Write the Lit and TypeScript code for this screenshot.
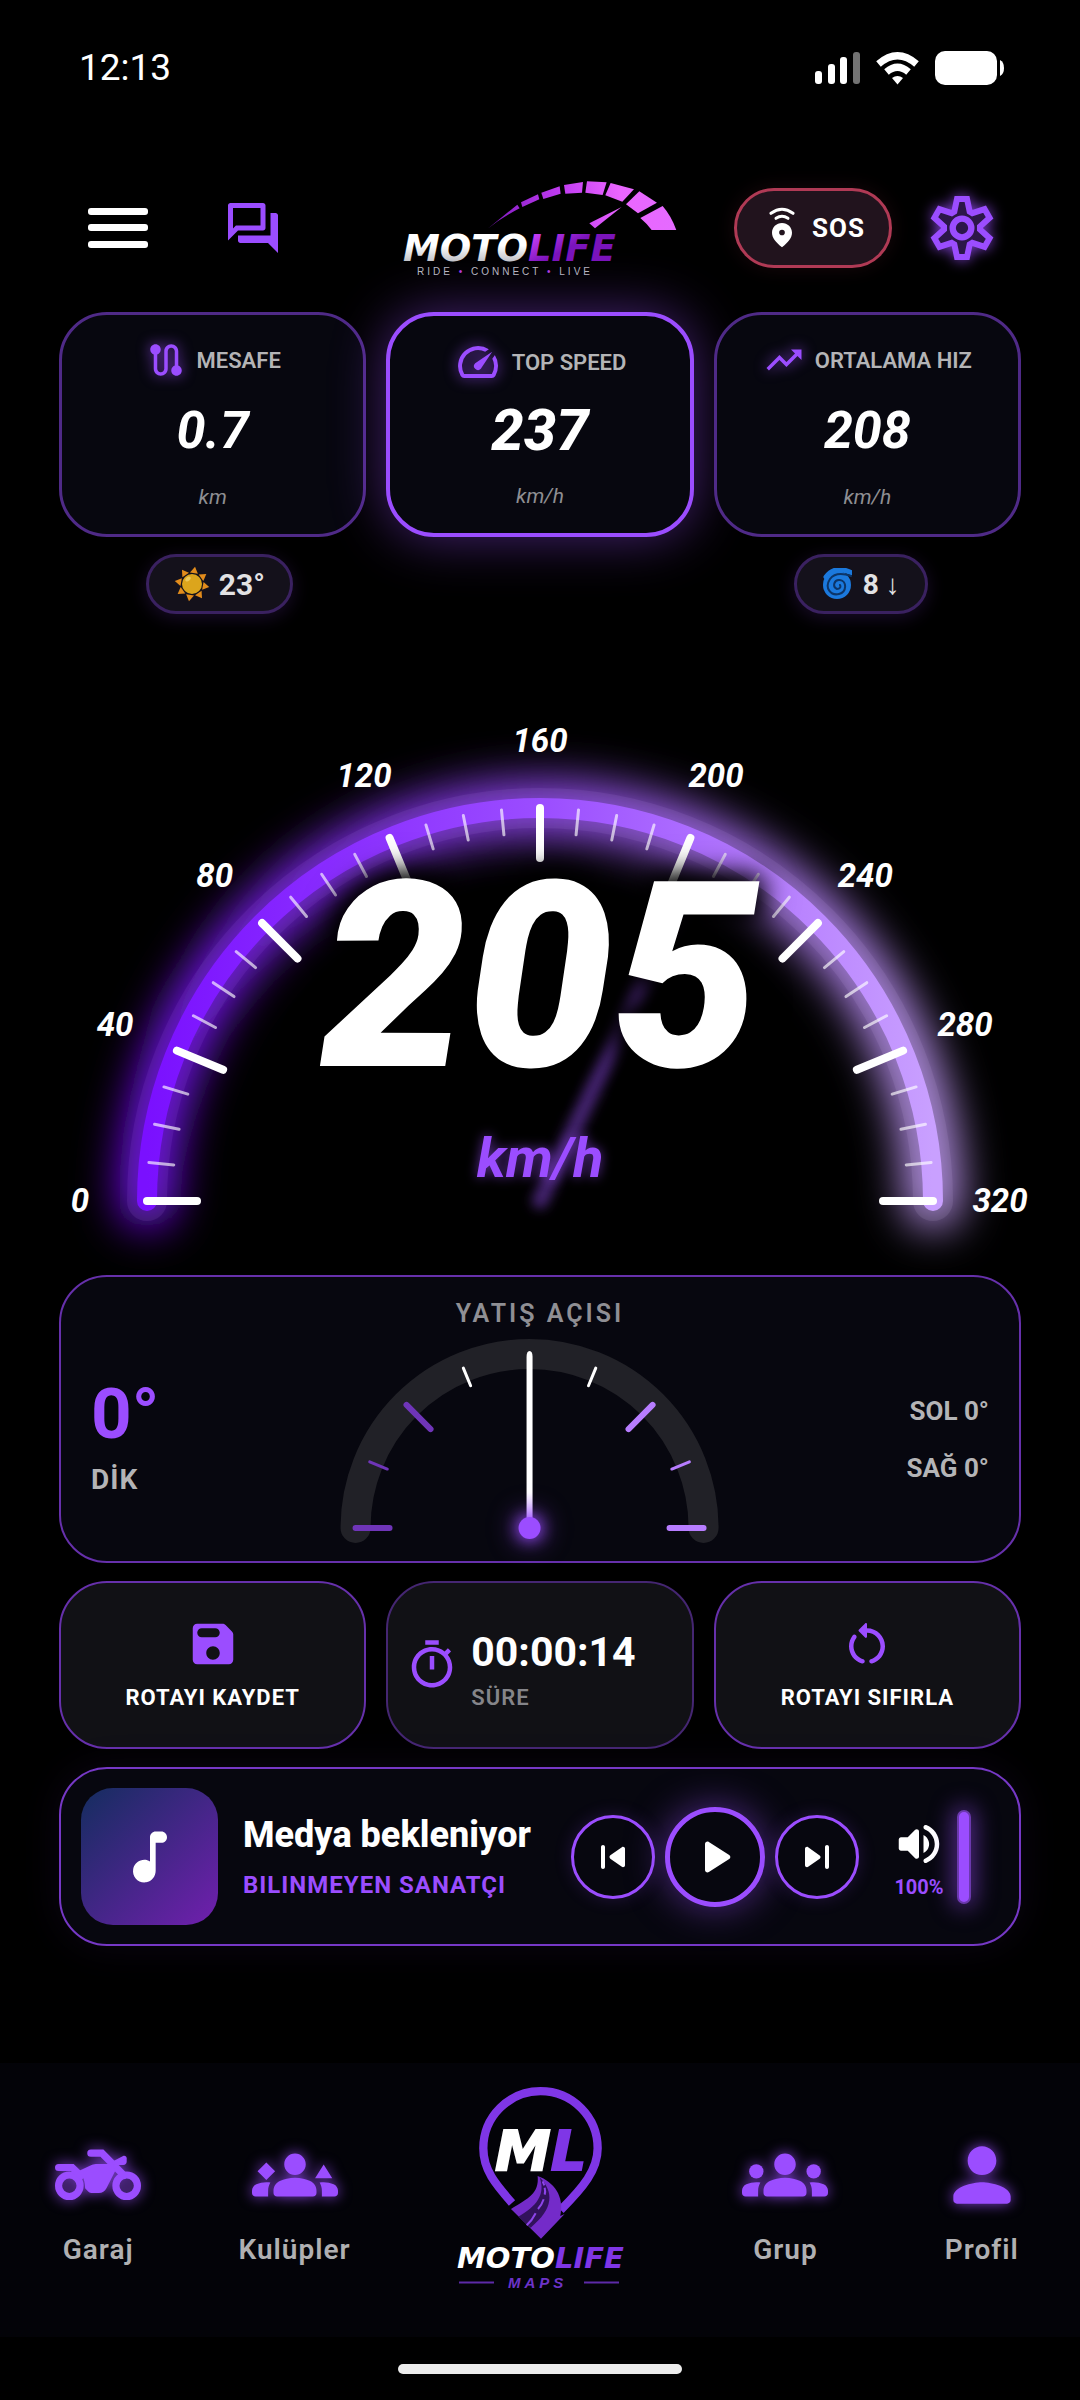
import { LitElement, html, svg, css, TemplateResult } from "lit";
import { customElement, property } from "lit/decorators.js";

/* Icon shapes on a 24-unit grid. */
const ICONS: Record<string, TemplateResult> = {
  forum: svg`<path d="M15 4v7H5.17L4 12.17V4h11m1-2H3c-.55 0-1 .45-1 1v14l4-4h10c.55 0 1-.45 1-1V3c0-.55-.45-1-1-1zm5 4h-2v9H6v2c0 .55.45 1 1 1h11l4 4V7c0-.55-.45-1-1-1z"/>`,
  route: svg`<path d="M19 15.18V7c0-2.21-1.79-4-4-4s-4 1.79-4 4v10c0 1.1-.9 2-2 2s-2-.9-2-2V8.82C8.16 8.4 9 7.3 9 6c0-1.66-1.34-3-3-3S3 4.34 3 6c0 1.3.84 2.4 2 2.82V17c0 2.21 1.79 4 4 4s4-1.79 4-4V7c0-1.1.9-2 2-2s2 .9 2 2v8.18c-1.16.41-2 1.51-2 2.82 0 1.66 1.34 3 3 3s3-1.34 3-3c0-1.3-.84-2.4-2-2.82z"/>`,
  speed: svg`<path d="M20.38 8.57l-1.23 1.85a8 8 0 0 1-.22 7.58H5.07A8 8 0 0 1 15.58 6.85l1.85-1.23A10 10 0 0 0 3.35 19a2 2 0 0 0 1.72 1h13.85a2 2 0 0 0 1.74-1 10 10 0 0 0-.27-10.44zm-9.79 6.84a2 2 0 0 0 2.83 0l5.66-8.49-8.49 5.66a2 2 0 0 0 0 2.83z"/>`,
  trend: svg`<path d="M16 6l2.29 2.29-4.88 4.88-4-4L2 16.59 3.41 18l6-6 4 4 6.3-6.29L22 12V6z"/>`,
  save: svg`<path d="M17.59 3.59c-.38-.38-.89-.59-1.42-.59H5c-1.11 0-2 .9-2 2v14c0 1.1.9 2 2 2h14c1.1 0 2-.9 2-2V7.83c0-.53-.21-1.04-.59-1.41l-2.82-2.83zM12 19c-1.66 0-3-1.34-3-3s1.34-3 3-3 3 1.34 3 3-1.34 3-3 3zm1-10H7c-1.1 0-2-.9-2-2s.9-2 2-2h6c1.1 0 2 .9 2 2s-.9 2-2 2z"/>`,
  timer: svg`<path d="M15 1H9v2h6V1zm-4 13h2V8h-2v6zm8.03-6.61l1.42-1.42c-.43-.51-.9-.99-1.41-1.41l-1.42 1.42C16.07 4.74 14.12 4 12 4c-4.97 0-9 4.03-9 9s4.02 9 9 9 9-4.03 9-9c0-2.12-.74-4.07-1.97-5.61zM12 20c-3.87 0-7-3.13-7-7s3.13-7 7-7 7 3.13 7 7-3.13 7-7 7z"/>`,
  restart: svg`<path d="M12 5V3.21c0-.45-.54-.67-.85-.35l-2.8 2.79c-.2.2-.2.51 0 .71l2.79 2.79c.32.31.86.09.86-.36V7c3.31 0 6 2.69 6 6 0 2.72-1.83 5.02-4.31 5.75-.42.12-.69.52-.69.95 0 .65.62 1.16 1.25.97C17.57 19.7 20 16.64 20 13c0-4.42-3.58-8-8-8zM6 13c0-1.34.44-2.58 1.19-3.59.3-.4.26-.95-.09-1.31-.42-.42-1.14-.38-1.5.1C4.6 9.54 4 11.2 4 13c0 3.64 2.43 6.7 5.75 7.67.63.19 1.25-.33 1.25-.98 0-.43-.28-.83-.69-.94C7.83 18.02 6 15.72 6 13z"/>`,
  note: svg`<path d="M12 5v8.55c-.94-.54-2.1-.75-3.33-.32-1.34.48-2.37 1.67-2.61 3.07-.46 2.74 1.86 5.08 4.59 4.65 1.96-.31 3.35-2.11 3.35-4.1V7h2c1.1 0 2-.9 2-2s-.9-2-2-2h-2c-1.1 0-2 .9-2 2z"/>`,
  prev: svg`<path d="M7 6c.55 0 1 .45 1 1v10c0 .55-.45 1-1 1s-1-.45-1-1V7c0-.55.45-1 1-1zm3.66 6.82l5.77 4.07c.66.47 1.58-.01 1.58-.82V7.93c0-.81-.91-1.28-1.58-.82l-5.77 4.07c-.57.4-.57 1.24 0 1.64z"/>`,
  play: svg`<path d="M8 6.82v10.36c0 .79.87 1.27 1.54.84l8.14-5.18c.62-.39.62-1.29 0-1.69L9.54 5.98C8.87 5.55 8 6.03 8 6.82z"/>`,
  next: svg`<path d="M7.58 16.89l5.77-4.07c.56-.4.56-1.24 0-1.63L7.58 7.11C6.91 6.65 6 7.12 6 7.93v8.14c0 .81.91 1.28 1.58.82zM16 7v10c0 .55.45 1 1 1s1-.45 1-1V7c0-.55-.45-1-1-1s-1 .45-1 1z"/>`,
  volume: svg`<path d="M3 10v4c0 .55.45 1 1 1h3l3.29 3.29c.63.63 1.71.18 1.71-.71V6.41c0-.89-1.08-1.34-1.71-.71L7 9H4c-.55 0-1 .45-1 1zm13.5 2c0-1.77-1.02-3.29-2.5-4.03v8.05c1.48-.73 2.5-2.25 2.5-4.02zM14 4.45v.2c0 .38.25.71.6.85C17.18 6.53 19 9.06 19 12s-1.82 5.47-4.4 6.5c-.36.14-.6.47-.6.85v.2c0 .63.63 1.07 1.21.85C18.6 19.11 21 15.84 21 12s-2.4-7.11-5.79-8.4c-.58-.23-1.21.22-1.21.85z"/>`,
  person: svg`<path d="M12 12c2.21 0 4-1.79 4-4s-1.79-4-4-4-4 1.79-4 4 1.79 4 4 4zm0 2c-2.67 0-8 1.34-8 4v1c0 .55.45 1 1 1h14c.55 0 1-.45 1-1v-1c0-2.66-5.33-4-8-4z"/>`,
  group: svg`<circle cx="4" cy="11" r="2"/><circle cx="20" cy="11" r="2"/><path d="M12 12.75c1.63 0 3.07.39 4.24.9 1.08.48 1.76 1.56 1.76 2.73V17c0 .55-.45 1-1 1H7c-.55 0-1-.45-1-1v-.61c0-1.18.68-2.26 1.76-2.73 1.17-.52 2.61-.91 4.24-.91zM5.13 14.1c-.37-.06-.74-.1-1.13-.1-.99 0-1.93.21-2.78.58C.48 14.9 0 15.62 0 16.43V17c0 .55.45 1 1 1h3.5v-1.61c0-.83.23-1.61.63-2.29zM24 16.43c0-.81-.48-1.53-1.22-1.85-.85-.37-1.79-.58-2.78-.58-.39 0-.76.04-1.13.1.4.68.63 1.46.63 2.29V18H23c.55 0 1-.45 1-1v-.57zM12 6c1.66 0 3 1.34 3 3s-1.34 3-3 3-3-1.34-3-3 1.34-3 3-3z"/>`,
  clubs: svg`<path d="M4 8.5l2.45 2.45L4 13.4l-2.45-2.45zM20 9.1l2.4 3.8h-4.8z"/><path d="M12 12.75c1.63 0 3.07.39 4.24.9 1.08.48 1.76 1.56 1.76 2.73V17c0 .55-.45 1-1 1H7c-.55 0-1-.45-1-1v-.61c0-1.18.68-2.26 1.76-2.73 1.17-.52 2.61-.91 4.24-.91zM5.13 14.1c-.37-.06-.74-.1-1.13-.1-.99 0-1.93.21-2.78.58C.48 14.9 0 15.62 0 16.43V17c0 .55.45 1 1 1h3.5v-1.61c0-.83.23-1.61.63-2.29zM24 16.43c0-.81-.48-1.53-1.22-1.85-.85-.37-1.79-.58-2.78-.58-.39 0-.76.04-1.13.1.4.68.63 1.46.63 2.29V18H23c.55 0 1-.45 1-1v-.57zM12 6c1.66 0 3 1.34 3 3s-1.34 3-3 3-3-1.34-3-3 1.34-3 3-3z"/>`,
  bike: svg`<g fill="none" stroke="currentColor" stroke-width="2"><circle cx="4" cy="15" r="3"/><circle cx="20" cy="15" r="3"/><path d="M10 5.9h3.1l6.1 6.2" stroke-linecap="round"/><path d="M1 9.9h3.8l2.4 2.3" stroke-linecap="round"/></g><path d="M15.8 8.4L19 6.7c.5-.2 1 .1 1 .6v1c0 .5-.4.9-.9.9h-2.5z"/><path d="M6.6 10.9l3.6-1.7c.6-.2 1-.3 1.600-.3h4.400l.6 2-2.400 4.700c-.5.9-1.200 1.400-2.200 1.400h-1.600c-.6 0-1-.1-1.400-.5l-.8-.8c0-1.600-.4-3.400-1.800-4.800z"/>`,
};

const icon = (name: string, cls = "") =>
  html`<svg class="icon ${cls}" viewBox="0 0 24 24" fill="currentColor" aria-hidden="true">${ICONS[name]}</svg>`;

/* Six-toothed gear outline, each tooth being the first one turned by 60°. */
const gearPoints = Array.from({ length: 6 }, (_, i) => {
  const a = (i * Math.PI) / 3;
  return [[-23, -49], [-15, -87], [15, -87], [23, -49]]
    .map(([x, y]) => `${(x * Math.cos(a) - y * Math.sin(a)).toFixed(1)},${(x * Math.sin(a) + y * Math.cos(a)).toFixed(1)}`)
    .join(" ");
}).join(" ");

const polar = (cx: number, cy: number, r: number, deg: number) => {
  const a = (deg * Math.PI) / 180;
  return { x: cx - r * Math.cos(a), y: cy - r * Math.sin(a) };
};

@customElement("speed-gauge")
export class SpeedGauge extends LitElement {
  @property({ type: Number }) speed = 0;
  @property({ type: Number }) max = 320;

  static styles = css`
    :host { display: block; }
    svg { display: block; width: 100%; overflow: visible; font-family: Roboto, "Liberation Sans", sans-serif; font-style: italic; }
    .mark { font-size: 33px; font-weight: 700; fill: #fff; text-anchor: middle; }
    .speed { font-size: 260px; font-weight: 900; fill: #fff; text-anchor: middle; filter: drop-shadow(0 0 14px #000) drop-shadow(0 0 12px #000); }
    .unit { font-size: 56px; font-weight: 700; fill: #9b4dff; text-anchor: middle; filter: drop-shadow(0 0 6px rgba(155, 77, 255, 0.6)); }
  `;

  render() {
    const cx = 540, cy = 1200, r = 393;
    const arc = `M${cx - r} ${cy}A${r} ${r} 0 0 1 ${cx + r} ${cy}`;
    const marks = [];
    for (let v = 0; v <= this.max; v += 10) {
      const deg = (v / this.max) * 180;
      const major = v % 40 === 0;
      const a = polar(cx, cy, r, deg);
      const b = polar(cx, cy, major ? 343 : 368, deg);
      marks.push(svg`<line x1=${a.x} y1=${a.y} x2=${b.x} y2=${b.y} stroke="#fff"
        stroke-opacity=${major ? 1 : 0.65} stroke-width=${major ? 8 : 3} stroke-linecap="round"/>`);
      if (major) {
        const t = polar(cx, cy, 460, deg);
        marks.push(svg`<text class="mark" x=${t.x} y=${t.y + 11}>${v}</text>`);
      }
    }
    const tip = polar(cx, cy, 320, (this.speed / this.max) * 180);
    return html`
      <svg viewBox="0 613 1080 661" role="img" aria-label="${this.speed} km/h">
        <defs>
          <linearGradient id="band" gradientUnits="userSpaceOnUse" x1="147" y1="0" x2="933" y2="0">
            <stop offset="0" stop-color="#7a10ff"/><stop offset="0.5" stop-color="#9b4dff"/><stop offset="1" stop-color="#c9a0ff"/>
          </linearGradient>
          <filter id="glow" filterUnits="userSpaceOnUse" x="0" y="640" width="1080" height="720"><feGaussianBlur stdDeviation="22"/></filter>
          <filter id="soft" filterUnits="userSpaceOnUse" x="400" y="800" width="400" height="480"><feGaussianBlur stdDeviation="6"/></filter>
        </defs>
        <path d=${arc} fill="none" stroke="#fff" stroke-opacity="0.1" stroke-width="40" stroke-linecap="round"/>
        <path d=${arc} fill="none" stroke="url(#band)" stroke-opacity="0.9" stroke-width="56" stroke-linecap="round" filter="url(#glow)"/>
        <path d=${arc} fill="none" stroke="url(#band)" stroke-width="20" stroke-linecap="round"/>
        ${marks}
        <line x1=${cx} y1=${cy} x2=${tip.x} y2=${tip.y} stroke="#9b4dff" stroke-opacity="0.45" stroke-width="16" stroke-linecap="round" filter="url(#soft)"/>
        <text class="speed" x=${cx} y="1065">${this.speed}</text>
        <text class="unit" x=${cx} y="1176">km/h</text>
      </svg>`;
  }
}

@customElement("lean-gauge")
export class LeanGauge extends LitElement {
  @property({ type: Number }) angle = 0;

  static styles = css`
    :host { display: block; flex: 1; min-width: 0; }
    svg { display: block; width: 100%; height: 213px; overflow: visible; }
    .hub { filter: drop-shadow(0 0 8px #9b4dff) drop-shadow(0 0 12px rgba(155, 77, 255, 0.7)); }
  `;

  render() {
    const cx = 200, cy = 195;
    const ticks = [0, 1, 2, 3, 5, 6, 7, 8].map((i) => {
      const deg = i * 22.5;
      const long = i % 2 === 0;
      const a = polar(cx, cy, long ? 174 : 173, deg);
      const b = polar(cx, cy, long ? 140 : 154, deg);
      const color = i < 3 ? "#6f35b8" : i > 5 ? "#b77dff" : "#fff";
      return svg`<line x1=${a.x} y1=${a.y} x2=${b.x} y2=${b.y} stroke=${color} stroke-width=${long ? 6 : 3} stroke-linecap="round"/>`;
    });
    return html`
      <svg viewBox="0 0 400 213" role="img" aria-label="${this.angle}°">
        <defs>
          <linearGradient id="needle" gradientUnits="userSpaceOnUse" x1="0" y1="18" x2="0" y2="195">
            <stop offset="0.8" stop-color="#fff"/><stop offset="0.95" stop-color="#c79aff"/>
          </linearGradient>
        </defs>
        <path d="M26 195A174 174 0 0 1 374 195" fill="none" stroke="#212127" stroke-width="30" stroke-linecap="round"/>
        ${ticks}
        <path d="M197 195V24Q197 18 200 18T203 24V195z" fill="url(#needle)" transform="rotate(${this.angle} 200 195)"/>
        <circle class="hub" cx="200" cy="195" r="11" fill="#9b4dff"/>
      </svg>`;
  }
}

@customElement("app-root")
export class AppRoot extends LitElement {
  static styles = css`
    :host {
      display: flex;
      flex-direction: column;
      min-height: 100vh;
      background: #000;
      color: #fff;
      font-family: Roboto, "Liberation Sans", sans-serif;
      --violet: #9b4dff;
      --panel: #07070f;
      --muted: #b4b4b6;
    }
    * { box-sizing: border-box; }
    button { font: inherit; color: inherit; background: none; border: 0; padding: 0; cursor: pointer; }
    svg { display: block; flex: none; }
    .icon { width: 42px; height: 42px; color: var(--violet); }
    .i48 { width: 48px; height: 48px; }
    .i54 { width: 54px; height: 54px; }
    .i60 { width: 60px; height: 60px; }
    .i68 { width: 68px; height: 68px; }
    .i86 { width: 86px; height: 86px; }
    .white { color: #fff; }
    .glow { filter: drop-shadow(0 0 7px rgba(155, 77, 255, 0.8)); }

    .status { display: flex; justify-content: space-between; align-items: center; padding: 44px 75px 0 79px; font-size: 37px; line-height: 48px; }
    .system { width: 190px; height: 36px; }

    .top { display: flex; align-items: center; padding: 83px 59px 0; }
    .side { flex: 1; display: flex; align-items: center; gap: 17px; }
    .side.right { justify-content: flex-end; gap: 11px; }
    .tap { width: 118px; height: 80px; display: flex; align-items: center; justify-content: center; }
    .brand { width: 280px; height: 106px; }
    .gear { width: 66px; height: 66px; overflow: visible; }
    .sos { height: 80px; display: flex; align-items: center; gap: 15px; padding: 0 24px 0 30px; border: 3px solid #b03a55; border-radius: 40px; background: #21131d; font-size: 26px; font-weight: 700; letter-spacing: 1px; box-shadow: 0 0 20px rgba(176, 58, 85, 0.14); }
    .word { font-family: "DejaVu Sans", Inter, sans-serif; font-weight: 700; font-style: italic; }
    .mono { stroke-width: 2px; paint-order: stroke; }
    .tag { font-family: "Liberation Sans", sans-serif; font-size: 10px; letter-spacing: 3px; fill: #b9b9c0; }

    .thirds { display: grid; grid-template-columns: repeat(3, minmax(0, 1fr)); gap: 20px; padding: 0 59px; }
    .stats { padding-top: 31px; }
    .stat { display: flex; flex-direction: column; align-items: center; padding: 24px 0; border: 3px solid #4f2a87; border-radius: 48px; background: var(--panel); }
    .label { display: flex; align-items: center; gap: 10px; height: 42px; font-size: 22px; font-weight: 600; color: var(--muted); }
    .value { margin: 20px 0 23px; font-size: 52px; line-height: 60px; font-weight: 700; font-style: italic; }
    .unit { font-size: 21px; line-height: 26px; font-style: italic; font-weight: 400; color: #8e8e92; }
    .stat.lead { padding: 23px 0; border: 4px solid var(--violet); box-shadow: 0 0 54px rgba(155, 77, 255, 0.46); }
    .lead .label { height: 46px; }
    .lead .value { margin: 11px 0 19px; font-size: 58px; line-height: 68px; font-weight: 800; }

    .weather { display: grid; grid-template-columns: repeat(3, minmax(0, 1fr)); justify-items: center; padding: 17px 59px 0; }
    .pill { grid-column: 1; height: 60px; display: flex; align-items: center; gap: 9px; padding: 0 25px; border: 3px solid #3a2160; border-radius: 30px; background: #14111b; color: #e2e2e4; font-size: 30px; font-weight: 700; box-shadow: 0 4px 18px rgba(155, 77, 255, 0.16); }
    .pill.wind { grid-column: 3; font-size: 28px; gap: 11px; }

    .panel { margin: 0 59px; border: 2px solid #6630ab; border-radius: 48px; background: var(--panel); }
    .lean { padding: 22px 30px 15px; }
    .lean h2 { margin: 0 0 4px; text-align: center; font-size: 25px; line-height: 30px; font-weight: 600; letter-spacing: 3px; color: #8f8f94; }
    .leanrow { display: flex; align-items: center; }
    .tilt { font-size: 71px; line-height: 80px; font-weight: 700; color: var(--violet); }
    .pose { margin: 10px 0 9px; font-size: 28px; line-height: 32px; font-weight: 700; letter-spacing: 1px; color: var(--muted); }
    .extremes { display: grid; gap: 27px; padding-left: 6px; text-align: right; font-size: 26px; line-height: 30px; font-weight: 700; color: var(--muted); }

    .actions { padding-top: 18px; }
    .action { height: 168px; display: flex; flex-direction: column; align-items: center; justify-content: center; gap: 14px; padding-bottom: 2px; border: 2px solid #6630ab; border-radius: 48px; background: #111115; font-size: 22px; line-height: 26px; font-weight: 700; letter-spacing: 1px; }
    .clock { flex-direction: row; justify-content: flex-start; gap: 12px; padding: 0 0 0 17px; border-color: #452672; }
    .times { padding-top: 9px; }
    .elapsed { font-size: 41px; line-height: 46px; font-weight: 700; letter-spacing: 0; }
    .caption { margin-top: 10px; font-size: 22px; line-height: 26px; font-weight: 600; color: #858589; }

    .media { margin-top: 18px; display: flex; align-items: center; padding: 19px 48px 19px 20px; border-color: #7638c6; box-shadow: 0 0 40px rgba(155, 77, 255, 0.08); }
    .art { width: 137px; height: 137px; display: grid; place-items: center; border-radius: 32px; background: linear-gradient(135deg, #142d5f, #711fae); }
    .track { flex: 1; min-width: 0; padding-left: 25px; white-space: nowrap; }
    .title { font-size: 36px; line-height: 42px; font-weight: 800; }
    .artist { margin-top: 15px; font-size: 24px; line-height: 28px; font-weight: 700; letter-spacing: 1px; color: var(--violet); }
    .controls { display: flex; align-items: center; gap: 10px; }
    .round { width: 84px; height: 84px; display: grid; place-items: center; border: 3px solid var(--violet); border-radius: 50%; background: var(--panel); box-shadow: 0 0 18px rgba(155, 77, 255, 0.18); }
    .round.main { width: 100px; height: 100px; border-width: 5px; box-shadow: 0 0 38px rgba(155, 77, 255, 0.5); }
    .volume { display: flex; align-items: center; gap: 11px; padding-left: 33px; }
    .level { display: flex; flex-direction: column; align-items: center; font-size: 20px; line-height: 24px; font-weight: 700; color: var(--violet); gap: 4px; padding-top: 2px; }
    .slider { appearance: none; writing-mode: vertical-lr; direction: rtl; width: 14px; height: 94px; margin: 0; border: 2px solid #6b39ad; border-radius: 7px; background: var(--violet); box-shadow: 0 0 22px 4px rgba(155, 77, 255, 0.5); }
    .slider::-webkit-slider-thumb { appearance: none; width: 10px; height: 10px; background: transparent; }

    .tabs { margin-top: auto; display: grid; grid-template-columns: 2fr 2fr 3fr 2fr 2fr; align-items: start; background: #030308; padding: 19px 0 43px; }
    .tab { display: flex; flex-direction: column; align-items: center; gap: 14px; padding-top: 50px; font-size: 28px; line-height: 36px; font-weight: 600; letter-spacing: 1px; color: #b0b0b2; text-decoration: none; }
    .maps { display: flex; justify-content: center; }
    .maps svg { width: 170px; height: 212px; }
    .maps .sub { font-family: "Liberation Sans", sans-serif; font-size: 15px; font-weight: 700; font-style: italic; letter-spacing: 4px; fill: #6d33c8; }
    .home { height: 63px; display: flex; justify-content: center; padding-top: 27px; }
    .home i { width: 284px; height: 10px; border-radius: 5px; background: #ececec; }
  `;

  private stat(name: string, label: string, value: string, unit: string, lead = false) {
    return html`<section class="stat ${lead ? "lead" : ""}">
      <div class="label">${icon(name, lead ? "glow i48" : "glow")}<span>${label}</span></div>
      <div class="value">${value}</div>
      <div class="unit">${unit}</div>
    </section>`;
  }

  private tab(name: string, label: string) {
    return html`<a class="tab" href="#${name}">${icon(name, "i86 glow")}<span>${label}</span></a>`;
  }

  private brand() {
    return html`<svg class="brand" viewBox="20 15 280 106" role="img" aria-label="MotoLife">
      <defs>
        <linearGradient id="dial" gradientUnits="userSpaceOnUse" x1="323" y1="205" x2="860" y2="100"><stop offset="0" stop-color="#7d18bd"/><stop offset="0.45" stop-color="#c23df2"/><stop offset="0.75" stop-color="#ea66ff"/><stop offset="1" stop-color="#e56aff"/></linearGradient>
        <linearGradient id="steel" gradientUnits="userSpaceOnUse" x1="0" y1="75" x2="0" y2="101"><stop offset="0.4" stop-color="#fff"/><stop offset="1" stop-color="#c4c6ca"/></linearGradient>
        <linearGradient id="life" gradientUnits="userSpaceOnUse" x1="150" y1="75" x2="165" y2="101"><stop offset="0" stop-color="#cb40f8"/><stop offset="1" stop-color="#7a14bb"/></linearGradient>
      </defs>
      <g transform="scale(0.3333)" fill="url(#dial)">
        <path d="M323 206L412 134 419 145Q370 170 323 206z"/>
        <path d="M423 127L474 103 478 118 427 141z"/>
        <path d="M484 98L539 79 542 101 490 117z"/>
        <path d="M552 75L609 66 606 98 556 101z"/>
        <path d="M621 64L680 67 668 105 616 98z"/>
        <path d="M692 69L762 88 727 125 676 106z"/>
        <path d="M778 94L831 128 774 160 738 133z"/>
        <path d="M848 138Q874 168 889 210L815 210Q800 190 781 174z"/>
        <path d="M725 141L645 205 628 190z"/>
      </g>
      <text class="word" font-size="37" x="23" y="101" fill="url(#steel)">MOTO<tspan fill="url(#life)">LIFE</tspan></text>
      <text class="tag" x="37" y="115">RIDE <tspan fill="#b23be0">•</tspan> CONNECT <tspan fill="#b23be0">•</tspan> LIVE</text>
    </svg>`;
  }

  private mapsLogo() {
    return html`<svg viewBox="25 22 170 212" role="img" aria-label="MotoLife Maps">
      <g transform="scale(0.3333)">
        <path d="M246 429C196 372 160 330 160 265A171 171 0 0 1 503 265C503 330 460 382 392 450" fill="none" stroke="#7f36e6" stroke-width="25"/>
        <path d="M323 348C372 366 404 408 391 468L404 462 333 536 243 447C295 415 328 400 323 348z" fill="#742bc9"/>
        <path d="M329 352C372 396 372 446 302 503L265 470C318 440 348 405 329 352z" fill="#32125c"/>
        <path d="M290 496Q306 482 317 460M324 447Q336 434 341 418M344 404Q347 395 344 383M343 376L338 364" fill="none" stroke="#8d45ea" stroke-width="6"/>
      </g>
      <text class="word mono" x="65" y="110" font-size="56" fill="#fff" stroke="#fff">M<tspan fill="#7f36e6" stroke="#7f36e6">L</tspan></text>
      <text class="word" x="27" y="208" font-size="29" fill="#fff">MOTO<tspan fill="#7f36e6">LIFE</tspan></text>
      <path d="M29 222.500H64M154 222.500H189" stroke="#5d2aa8" stroke-width="2"/>
      <text class="sub" x="78" y="228">MAPS</text>
    </svg>`;
  }

  render() {
    return html`
      <div class="status">
        <span>12:13</span>
        <svg class="system" viewBox="815 50 190 36" fill="#fff" aria-hidden="true">
          <rect x="815" y="71" width="7" height="13" rx="3"/><rect x="828" y="64" width="7" height="20" rx="3"/>
          <rect x="840" y="57" width="7" height="27" rx="3"/><rect x="853" y="52" width="7" height="32" rx="3" opacity="0.45"/>
          <g fill="none" stroke="#fff" stroke-width="7"><path d="M878.500 64Q897.500 47.500 916.500 64"/><path d="M886.500 72Q897.500 62.500 908.500 72"/></g>
          <path d="M892 78Q897.500 74 903 78L897.500 84.500z"/>
          <rect x="935" y="51" width="62" height="34" rx="10"/><path d="M1000 60q4 2 4 8t-4 8z"/>
        </svg>
      </div>

      <header class="top">
        <div class="side">
          <button class="tap" aria-label="Menü">
            <svg width="60" height="40" viewBox="0 0 60 40" fill="#fff"><rect width="60" height="7" rx="3"/><rect y="16" width="60" height="7" rx="3"/><rect y="33" width="60" height="7" rx="3"/></svg>
          </button>
          <button class="tap" aria-label="Sohbet">${icon("forum", "i60")}</button>
        </div>
        ${this.brand()}
        <div class="side right">
          <button class="sos">
            <svg width="30" height="42" viewBox="199 142 90 126" aria-hidden="true">
              <g fill="none" stroke="#fff" stroke-width="9" stroke-linecap="round"><path d="M211 161Q244 137 277 161"/><path d="M226 176Q244 164 262 176"/></g>
              <path fill="#fff" fill-rule="evenodd" d="M244 190c17 0 30 13 30 29 0 15-11 28-30 44-19-16-30-29-30-44 0-16 13-29 30-29zm0 20a8.500 8.500 0 1 0 0 17 8.500 8.500 0 0 0 0-17z"/>
            </svg>
            <span>SOS</span>
          </button>
          <button class="tap" aria-label="Ayarlar">
            <svg class="gear glow" viewBox="-99 -99 198 198" fill="none" stroke="#9b4dff">
              <polygon points=${gearPoints} fill="#2c1749" stroke-width="18"/><circle r="28" stroke-width="19"/>
            </svg>
          </button>
        </div>
      </header>

      <div class="thirds stats">
        ${this.stat("route", "MESAFE", "0.7", "km")}
        ${this.stat("speed", "TOP SPEED", "237", "km/h", true)}
        ${this.stat("trend", "ORTALAMA HIZ", "208", "km/h")}
      </div>

      <div class="weather">
        <div class="pill">
          <svg width="36" height="36" viewBox="-18 -18 36 36" aria-hidden="true">
            ${[10, 55, 100, 145, 190, 235, 280, 325].map((a) => svg`<path d="M-4 -11L0 -17.500 4 -11z" fill="#e28c1c" transform="rotate(${a})"/>`)}
            <circle r="10" fill="#dca51c"/><ellipse cx="-4" cy="-5" rx="3" ry="2" fill="#ecc95a" transform="rotate(-40 -4 -5)"/>
          </svg>
          <span>23°</span>
        </div>
        <div class="pill wind">
          <svg width="30" height="32" viewBox="0 0 30 32" fill="none" stroke-linecap="round" aria-hidden="true">
            <circle cx="15" cy="17" r="14" fill="#1b79dd"/><path d="M4 9Q13 -3 29 4.500" stroke="#1b79dd" stroke-width="5"/>
            <path d="M29 8Q14 3 8 11C2 20 9 28 17 26C25 24 25 13 18 12C12 11 10 19 15 21C18 21 19 19 18 17" stroke="#0c3568" stroke-width="2"/>
          </svg>
          <span>8 ↓</span>
        </div>
      </div>

      <speed-gauge .speed=${205}></speed-gauge>

      <section class="panel lean">
        <h2>YATIŞ AÇISI</h2>
        <div class="leanrow">
          <div><div class="tilt">0°</div><div class="pose">DİK</div></div>
          <lean-gauge .angle=${0}></lean-gauge>
          <div class="extremes"><span>SOL 0°</span><span>SAĞ 0°</span></div>
        </div>
      </section>

      <div class="thirds actions">
        <button class="action">${icon("save", "i54")}<span>ROTAYI KAYDET</span></button>
        <div class="action clock">
          ${icon("timer", "i54")}
          <div class="times"><div class="elapsed">00:00:14</div><div class="caption">SÜRE</div></div>
        </div>
        <button class="action">${icon("restart", "i54")}<span>ROTAYI SIFIRLA</span></button>
      </div>

      <section class="panel media">
        <div class="art">${icon("note", "i68 white")}</div>
        <div class="track"><div class="title">Medya bekleniyor</div><div class="artist">BILINMEYEN SANATÇI</div></div>
        <div class="controls">
          <button class="round" aria-label="Önceki">${icon("prev", "i48 white")}</button>
          <button class="round main" aria-label="Oynat">${icon("play", "i60 white")}</button>
          <button class="round" aria-label="Sonraki">${icon("next", "i48 white")}</button>
        </div>
        <div class="volume">
          <label class="level" for="volume">${icon("volume", "i54 white")}<span>100%</span></label>
          <input class="slider" id="volume" type="range" min="0" max="100" value="100" />
        </div>
      </section>

      <nav class="tabs">
        ${this.tab("bike", "Garaj")}
        ${this.tab("clubs", "Kulüpler")}
        <a class="maps" href="#maps">${this.mapsLogo()}</a>
        ${this.tab("group", "Grup")}
        ${this.tab("person", "Profil")}
      </nav>
      <div class="home"><i></i></div>
    `;
  }
}
